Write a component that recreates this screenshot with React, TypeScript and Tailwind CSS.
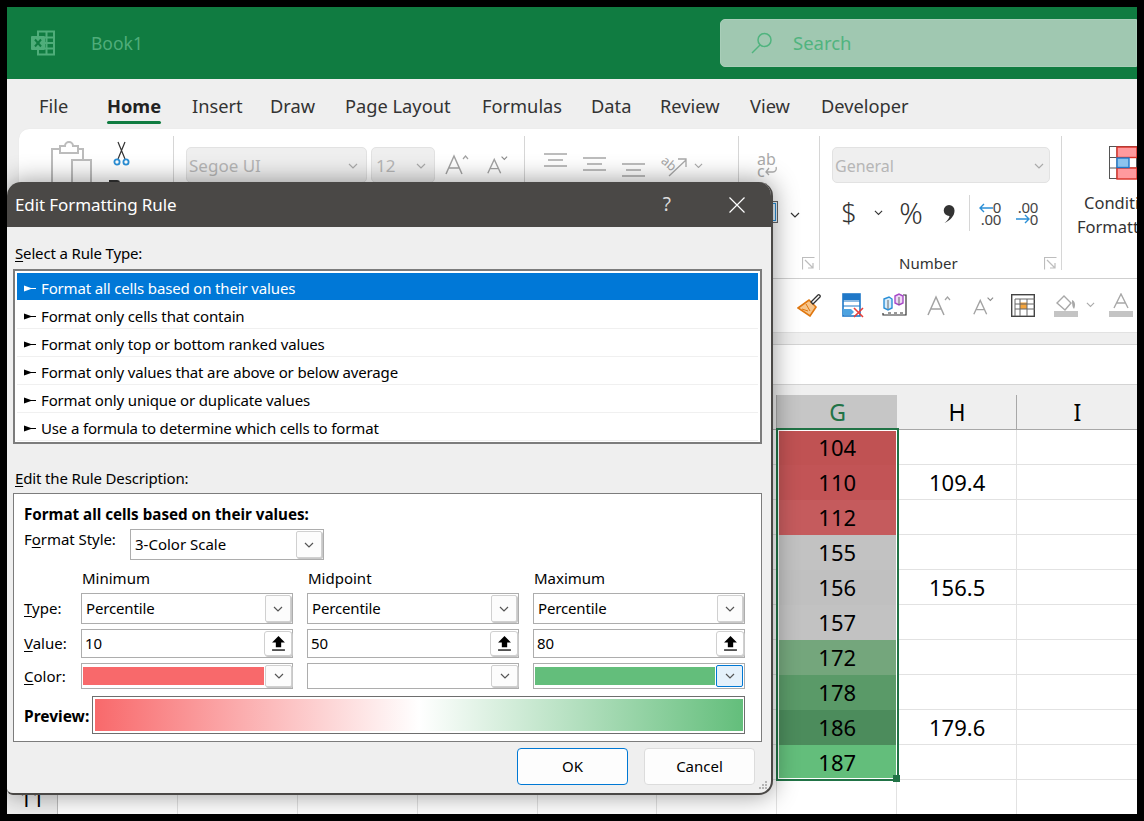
import React from "react";

const Chev = ({ c = "#9a9a9a", w = 10 }: { c?: string; w?: number }) => (
  <svg width={w} height={w * 0.6} viewBox="0 0 10 6" fill="none" stroke={c} strokeWidth="1.2"><path d="M1 1l4 4 4-4" /></svg>
);

const ExcelIcon = () => (
  <svg width="25" height="26" viewBox="0 0 25 26" fill="none">
    <path d="M7 1.500h16v23H7z" fill="#107c41" stroke="#4fad7a" strokeWidth="2" />
    <path d="M14 7.500h9M14 13h9M14 18.500h9M15.500 2v22" stroke="#4fad7a" strokeWidth="2" />
    <rect x="0" y="6" width="14" height="14" rx="1" fill="#4fad7a" />
    <path d="M4 9.500l6 7M10 9.500l-6 7" stroke="#107c41" strokeWidth="2" />
  </svg>
);

const Clipboard = () => (
  <svg width="42" height="42" viewBox="0 0 42 42" fill="none" stroke="#bcbcbc" strokeWidth="2">
    <path d="M1 41V8h8V5h5a4 4 0 0 1 8 0h5v3h5v10" />
    <path d="M9 8v4h18V8" />
    <path d="M21 19h19v23H21z" fill="#fbfbfb" />
  </svg>
);

const Scissors = () => (
  <svg width="17" height="25" viewBox="0 0 17 25" fill="none">
    <path d="M12 1L5 18M5 1l7 17" stroke="#333" strokeWidth="1.2" />
    <circle cx="4" cy="21" r="2.600" stroke="#2b8fd6" strokeWidth="1.800" />
    <circle cx="13" cy="21" r="2.600" stroke="#2b8fd6" strokeWidth="1.800" />
  </svg>
);

const FontGrow = ({ up, big, c = "#a3a3a3" }: { up: boolean; big?: boolean; c?: string }) => (
  <svg width={big ? 24 : 22} height="22" viewBox="0 0 24 22" fill="none" stroke={c} strokeWidth="1.500">
    {big ? <path d="M1 21L9 3l8 18M4 15h10" /> : <path d="M2 21L9 6l7 15M5 16h8" />}
    <path d={up ? "M18 6l2.500-3L23 6" : "M17 3l3 3 3-3"} strokeWidth="1.200" stroke={up ? c : "#8a8a8a"} />
  </svg>
);

const AlignLines = () => (
  <svg width="23" height="15" viewBox="0 0 23 15" stroke="#a8a8a8" strokeWidth="1.300"><path d="M0 1h23M4 7h15M0 13h23" /></svg>
);

const Orient = () => (
  <svg width="26" height="24" viewBox="0 0 26 24" fill="none" stroke="#a8a8a8" strokeWidth="1.300">
    <path d="M8 23L25 7M17 6h8v8" />
    <text x="0" y="13" fontSize="13" fill="#a8a8a8" stroke="none" transform="rotate(40 5 10)">ab</text>
  </svg>
);

const Launcher = () => (
  <svg width="13" height="13" viewBox="0 0 13 13" fill="none" stroke="#bdbdbd" strokeWidth="1.200">
    <path d="M.5 12.500V.5h12M3 3l8 8M11 6v5H6" />
  </svg>
);

const CondFormat = () => (
  <svg width="28" height="34" viewBox="0 0 28 34" className="shrink-0">
    <rect x=".5" y=".5" width="27" height="32" fill="#fff" stroke="#555" />
    <path d="M8 1v32M0 11.500h28M0 22h28" stroke="#555" />
    <rect x="8" y="1" width="20" height="10.500" fill="#ff9a9e" stroke="#d93025" strokeWidth="1.400" />
    <rect x="8" y="22" width="20" height="11" fill="#ff9a9e" stroke="#d93025" strokeWidth="1.400" />
    <rect x="8" y="12" width="12" height="9.500" fill="#8cc4ee" stroke="#1f78c8" strokeWidth="1.400" />
  </svg>
);

const DecArrow = ({ left }: { left: boolean }) => (
  <div className="flex flex-col items-end w-[24px] text-[#444] text-[15px] leading-[12px] tracking-[-0.3px]">
    <div className="w-full text-right">{left ? "0" : ".00"}</div>
    <div className="w-full text-right">{left ? ".00" : "0"}</div>
  </div>
);

const Arrow = ({ left }: { left: boolean }) => (
  <svg width="14" height="10" viewBox="0 0 14 10" fill="none" stroke="#2b8fd6" strokeWidth="1.400" className={left ? "-mr-[16px] mb-[10px] z-10" : "-mr-[16px] mt-[12px] z-10"}>
    {left ? <path d="M14 5H1M5 1L1 5l4 4" /> : <path d="M0 5h13M9 1l4 4-4 4" />}
  </svg>
);

const Brush = () => (
  <svg width="25" height="24" viewBox="0 0 25 24" fill="none">
    <path d="M1 15l11-8 7 7-6 9z" fill="#f6c58c" stroke="#e0770f" strokeWidth="1.600" />
    <path d="M5 16l6 2M9 11l4 7" stroke="#e0770f" />
    <path d="M14 9l7-7c1-1 3 1 2 2l-7 7z" fill="#fff" stroke="#333" strokeWidth="1.300" />
  </svg>
);
const DeleteRule = () => (
  <svg width="23" height="25" viewBox="0 0 23 25" fill="none">
    <rect x="1" y="1" width="17" height="22" fill="#fff" stroke="#1f78c8" strokeWidth="1.600" />
    <rect x="1" y="1" width="17" height="6" fill="#1f78c8" />
    <path d="M1 8h17M1 13h17" stroke="#1f78c8" />
    <path d="M1 16h8l3 3-3 3H1z" fill="#4da3e0" />
    <path d="M12 15l9 9M21 15l-9 9" stroke="#e8403a" strokeWidth="1.600" />
  </svg>
);
const Cubes = () => (
  <svg width="25" height="24" viewBox="0 0 25 24" fill="none">
    <path d="M1 20v2h23V2h-3" stroke="#333" strokeWidth="1.200" />
    <path d="M6 20h3M12 20h3M18 20h3" stroke="#333" />
    <path d="M2 6l5-2 3 2v9l-4 2-4-2z" fill="#d6ecfb" stroke="#2b8fd6" strokeWidth="1.400" />
    <path d="M13 3l4-2 4 2v7l-4 2-4-2z" fill="#eed8f5" stroke="#a84ac8" strokeWidth="1.400" />
    <path d="M6 7v9M17 4v8" stroke="#666" />
  </svg>
);
const TableIcon = () => (
  <svg width="24" height="23" viewBox="0 0 24 23" fill="none">
    <rect x=".7" y=".7" width="22.600" height="21.600" fill="#fff" stroke="#444" strokeWidth="1.400" />
    <rect x="9" y="8.500" width="7" height="6.500" fill="#f4a43c" />
    <path d="M4 5h20M4 10h20M4 15h20M4 5v17M9 5v17M16 5v17" stroke="#666" />
  </svg>
);
const FillIcon = () => (
  <svg width="24" height="24" viewBox="0 0 24 24" fill="none">
    <path d="M3 10l7-7 7 7-6 7z" stroke="#a8a8a8" strokeWidth="1.400" />
    <path d="M18 7c3 1 4 5 2 9-2-2-2-6-2-9z" fill="#a8a8a8" />
    <rect y="18" width="24" height="6" fill="#c4c4c4" />
  </svg>
);
const AColor = () => (
  <svg width="24" height="24" viewBox="0 0 24 24" fill="none">
    <path d="M5 15L12 1l7 14M7.500 10h9" stroke="#a8a8a8" strokeWidth="1.400" />
    <rect y="18" width="24" height="6" fill="#c4c4c4" />
  </svg>
);

const Marker = ({ c }: { c: string }) => (
  <svg width="12" height="7" viewBox="0 0 12 7" className="shrink-0"><path d="M0 .5L7 3h5v1H7L0 6.500z" fill={c} /></svg>
);

const rules = [
  "Format all cells based on their values",
  "Format only cells that contain",
  "Format only top or bottom ranked values",
  "Format only values that are above or below average",
  "Format only unique or duplicate values",
  "Use a formula to determine which cells to format",
];

const DropBtn = ({ active, wide }: { active?: boolean; wide?: boolean }) => (
  <div className={active
    ? "w-[27px] h-full shrink-0 border border-[#0078d4] rounded-[2px] bg-[#e5f1fb] flex items-center justify-center"
    : wide
    ? "w-[27px] h-full shrink-0 border border-[#d0d0d0] rounded-[2px] bg-[#fcfcfc] shadow-[1px_1px_0_#c8c8c8] flex items-center justify-center"
    : "w-[26px] h-full shrink-0 border border-[#d0d0d0] rounded-[2px] bg-[#fcfcfc] shadow-[1px_1px_0_#c8c8c8] flex items-center justify-center"}>
    <Chev c="#555" />
  </div>
);

const SelectBox = ({ text }: { text: string }) => (
  <div className="h-[31px] border border-[#adadad] bg-white flex items-center justify-between pl-[4px] pr-[1px] py-[1px]">
    <span className="text-[15px] tracking-[-0.15px]">{text}</span>
    <DropBtn />
  </div>
);

const ValueBox = ({ text }: { text: string }) => (
  <div className="h-[29px] border border-[#adadad] bg-white flex items-center justify-between pl-[3px] py-[1px]">
    <span className="text-[15px]">{text}</span>
    <div className="w-[28px] h-full shrink-0 border border-[#d0d0d0] rounded-[3px] bg-white shadow-[1px_1px_0_#c8c8c8] flex items-center justify-center">
      <svg width="13" height="15" viewBox="0 0 12 14"><path d="M6 0l6 6H8.500v4.500h-5V6H0z" fill="#000" /><rect y="12.500" width="12" height="1.200" fill="#000" /></svg>
    </div>
  </div>
);

const ColorBox = ({ color, active }: { color?: string; active?: boolean }) => (
  <div className={active
    ? "h-[26px] border border-[#adadad] bg-white flex items-center pl-[1px] pr-[1px] py-[1px]"
    : "h-[26px] border border-[#adadad] bg-white flex items-center pl-[1px] py-[1px]"}>
    <div className="flex-1 h-[18px] mr-[1px]" style={color ? { backgroundColor: color } : undefined} />
    <DropBtn active={active} wide />
  </div>
);

const U = ({ children }: { children: React.ReactNode }) => <span className="underline underline-offset-2">{children}</span>;

const Dialog = () => (
  <div className="absolute left-0 top-[175px] w-[766px] h-[613px] bg-[#efefef] rounded-t-[14px] rounded-br-[14px] rounded-bl-[6px] border-r-2 border-b-2 border-[#4a4846] shadow-[0_0_26px_rgba(0,0,0,0.42)] flex flex-col text-black overflow-hidden">
    <div className="h-[45px] shrink-0 bg-[#4a4846] flex items-center pl-[8px] text-white text-[17px]">
      <span className="flex-1 tracking-[-0.1px]">Edit Formatting Rule</span>
      <span className="text-[#dcdcdc] text-[19px] mr-[58px]">?</span>
      <svg width="16" height="16" viewBox="0 0 16 16" stroke="#fff" strokeWidth="1.200" className="mr-[26px]"><path d="M.5.5l15 15M15.500.5l-15 15" /></svg>
    </div>
    <div className="flex-1 flex flex-col pl-[6px] relative text-[15px]">
      <div className="leading-[20px] mt-[16px] pl-[2px] tracking-[-0.15px]"><U>S</U>elect a Rule Type:</div>
      <div className="mt-[6px] w-[749px] h-[175px] border-2 border-[#7c7c7c] bg-white pt-[2px] px-[2px] pb-px flex flex-col">
        {rules.map((r, i) => (
          <div key={r} className={i === 0
            ? "h-[27px] bg-[#0078d7] text-white flex items-center pl-[7px] pt-[4px] gap-[5px] mb-px"
            : "h-[28px] border-b border-[#f0f0f0] flex items-center pl-[7px] pt-[4px] gap-[5px]"}>
            <Marker c={i === 0 ? "#fff" : "#000"} />
            <span className="tracking-[-0.15px]">{r}</span>
          </div>
        ))}
      </div>
      <div className="leading-[20px] mt-[24px] pl-[2px] tracking-[-0.15px]"><U>E</U>dit the Rule Description:</div>
      <div className="mt-[5px] w-[749px] h-[249px] border border-[#7c7c7c] bg-white pl-[10px] pr-[16px] pt-[10px] flex flex-col">
        <div className="text-[15.2px] font-bold leading-[20px]">Format all cells based on their values:</div>
        <div className="flex items-start mt-[5px]">
          <span className="w-[106px] leading-[20px] tracking-[-0.05px]">F<U>o</U>rmat Style:</span>
          <div className="w-[194px] h-[31px] border border-[#adadad] flex items-center justify-between pl-[4px] pr-[1px] py-[1px]">
            <span>3-Color Scale</span>
            <DropBtn />
          </div>
        </div>
        <div className="grid grid-cols-[43px_212px_212px_212px] gap-x-[14px] mt-[7px] items-center">
          <div />
          <div className="leading-[22px] pl-px">Minimum</div>
          <div className="leading-[22px] pl-px">Midpoint</div>
          <div className="leading-[22px] pl-px">Maximum</div>
        </div>
        <div className="grid grid-cols-[43px_212px_212px_212px] gap-x-[14px] gap-y-[5px] mt-[4px] items-center">
          <div><U>T</U>ype:</div>
          <SelectBox text="Percentile" /><SelectBox text="Percentile" /><SelectBox text="Percentile" />
          <div><U>V</U>alue:</div>
          <ValueBox text="10" /><ValueBox text="50" /><ValueBox text="80" />
          <div><U>C</U>olor:</div>
          <ColorBox color="#f8696b" /><ColorBox /><ColorBox color="#63be7b" active />
        </div>
        <div className="flex items-center mt-[7px]">
          <span className="w-[68px] text-[15.5px] font-bold pt-[3px]">Preview:</span>
          <div className="w-[653px] h-[38px] border border-[#6e6e6e] pl-[2px] py-[2px] pr-px">
            <div className="w-full h-full bg-[linear-gradient(to_right,#f8696b,#ffffff_50%,#63be7b)]" />
          </div>
        </div>
      </div>
      <div className="flex gap-[16px] mt-[6px] ml-[504px]">
        <div className="w-[111px] h-[37px] border border-[#0078d4] rounded-[4px] bg-[#fdfdfd] flex items-center justify-center">OK</div>
        <div className="w-[111px] h-[37px] border border-[#dcdcdc] rounded-[4px] bg-[#fdfdfd] flex items-center justify-center">Cancel</div>
      </div>
      <svg width="10" height="10" viewBox="0 0 10 10" fill="#b4b4b4" className="absolute right-[3px] bottom-[2px]">
        <rect x="7" y="0" width="2" height="2" /><rect x="4" y="3" width="2" height="2" /><rect x="7" y="3" width="2" height="2" /><rect x="1" y="6" width="2" height="2" /><rect x="4" y="6" width="2" height="2" /><rect x="7" y="6" width="2" height="2" />
      </svg>
    </div>
  </div>
);

const tabs: [string, string][] = [
  ["File", "w-[68px]"],
  ["Home", "w-[85px]"],
  ["Insert", "w-[78px]"],
  ["Draw", "w-[75px]"],
  ["Page Layout", "w-[137px]"],
  ["Formulas", "w-[109px]"],
  ["Data", "w-[69px]"],
  ["Review", "w-[90px]"],
  ["View", "w-[71px]"],
  ["Developer", "w-[89px]"],
];

const cells: [string, string, string][] = [
  ["104", "#c05253", ""],
  ["110", "#c25456", "109.4"],
  ["112", "#c55b5d", ""],
  ["155", "#c2c2c2", ""],
  ["156", "#c0c0c0", "156.5"],
  ["157", "#c2c2c2", ""],
  ["172", "#74a67c", ""],
  ["178", "#5a9a68", ""],
  ["186", "#4c8c5c", "179.6"],
  ["187", "#63be7b", ""],
];

const cols = ["A", "B", "C", "D", "E", "F"];

const Sheet = () => (
  <div className="flex flex-col relative">
    <div className="flex h-[35px]">
      <div className="w-[51px] bg-[#efefef] border-b border-[#a8a8a8]" />
      {cols.map((c) => (
        <div key={c} className="w-[120px] bg-[#efefef] border-b border-r border-[#a8a8a8] flex items-center justify-center text-[23px]">{c}</div>
      ))}
      <div className="w-[120px] bg-[#c6c6c6] border-b border-[#a8a8a8] flex items-center justify-center pl-px text-[23px] text-[#217346]">G</div>
      <div className="w-[120px] bg-[#efefef] border-b border-r border-[#a8a8a8] flex items-center justify-center pl-px text-[23px]">H</div>
      <div className="w-[120px] bg-[#efefef] border-b border-[#a8a8a8] flex items-center justify-center pl-px text-[23px]">I</div>
    </div>
    {[...cells, ["", "", ""] as [string, string, string]].map(([g, color, h], i) => (
      <div key={i} className="flex h-[35px]">
        <div className="w-[51px] bg-[#efefef] border-r border-[#bdbdbd] flex items-center justify-center text-[22px] pt-px">{i + 1}</div>
        {cols.map((c) => (
          <div key={c} className="w-[120px] bg-white border-b border-r border-[#e2e2e2]" />
        ))}
        <div className={color
          ? "w-[120px] flex items-center justify-center pb-[2px] text-[22px] leading-none"
          : "w-[120px] border-b border-r border-[#e2e2e2]"} style={color ? { backgroundColor: color } : undefined}>{g}</div>
        <div className="w-[120px] bg-white border-b border-r border-[#e2e2e2] flex items-center justify-center pl-px pb-px text-[22px] leading-none">{h}</div>
        <div className="w-[120px] bg-white border-b border-[#e2e2e2]" />
      </div>
    ))}
    <div className="absolute left-[769px] top-[33px] w-[123px] h-[353px] border-2 border-[#217346] outline outline-1 -outline-offset-3 outline-white">
      <div className="absolute -right-[3px] -bottom-[3px] w-[7px] h-[7px] bg-[#217346]" />
    </div>
  </div>
);

export default function App() {
  return (
    <div className="w-[1144px] h-[821px] bg-black p-[7px] font-['Noto_Sans','Open_Sans',sans-serif] text-black overflow-hidden">
      <div className="relative w-[1130px] h-[807px] overflow-hidden flex flex-col bg-white">
        <div className="h-[72px] shrink-0 bg-[#107c41] flex items-center pl-[24px]">
          <ExcelIcon />
          <span className="ml-[35px] text-[17.5px] text-[#4fad7a]">Book1</span>
          <div className="ml-auto w-[417px] h-[48px] bg-[#a0c8b1] rounded-l-[5px] border border-[#a9ceb9] flex items-center pl-[30px]">
            <svg width="22" height="22" viewBox="0 0 22 22" fill="none" stroke="#50b47f" strokeWidth="1.500"><circle cx="13.500" cy="8" r="6.500" /><path d="M9 13l-8 8" /></svg>
            <span className="ml-[20px] text-[18.5px] text-[#50b47f]">Search</span>
          </div>
        </div>
        <div className="h-[50px] shrink-0 bg-[#efefef] flex items-start pl-[32px] pt-[15px] text-[18.25px] leading-[24px] text-[#333] whitespace-nowrap">
          {tabs.map(([t, w]) => (
            <div key={t} className={w}>
              {t === "Home" ? (
                <div className="relative inline-block font-bold text-[#222]">
                  {t}
                  <div className="absolute left-0 right-0 top-[27px] h-[2.500px] rounded-full bg-[#107c41]" />
                </div>
              ) : t}
            </div>
          ))}
        </div>
        <div className="h-[150px] shrink-0 bg-[#efefef]">
          <div className="h-full ml-[12px] bg-white rounded-tl-[10px] border-b border-[#cfcfcf] flex pt-[7px] shadow-[0_0_1px_#ddd]">
            <div className="w-[155px] h-[134px] border-r border-[#d6d6d6] flex items-start pl-[32px] pt-[5px] gap-[20px] shrink-0">
              <Clipboard />
              <div className="flex flex-col">
                <Scissors />
                <div className="-ml-[4px] mt-[14px] w-[11px] h-[4px] border-t-2 border-r-2 border-[#333] rounded-tr-[3px]" />
              </div>
            </div>
            <div className="w-[351px] h-[134px] border-r border-[#d6d6d6] flex items-start pl-[12px] pt-[11px] shrink-0">
              <div className="w-[181px] h-[36px] rounded-[5px] bg-[#efefef] border border-[#e2e2e2] flex items-center justify-between pl-[2px] pr-[8px] pt-[2px] text-[17px] text-[#b6b6b6]">Segoe UI<Chev c="#aaa" /></div>
              <div className="w-[64px] h-[36px] ml-[4px] rounded-[5px] bg-[#efefef] border border-[#e2e2e2] flex items-center justify-between pl-[4px] pr-[8px] pt-[2px] text-[17px] text-[#b6b6b6]">12<Chev c="#aaa" /></div>
              <div className="ml-[10px] mt-[6px]"><FontGrow up big /></div>
              <div className="ml-[17px] mt-[6px]"><FontGrow up={false} /></div>
            </div>
            <div className="w-[214px] h-[134px] border-r border-[#d6d6d6] flex items-start pl-[19px] pt-[17px] gap-[16px] shrink-0">
              <AlignLines />
              <div className="mt-[4px]"><AlignLines /></div>
              <div className="mt-[10px]"><AlignLines /></div>
              <Orient />
              <div className="mt-[10px] -ml-[9px]"><Chev c="#aaa" w={9} /></div>
            </div>
            <div className="w-[81px] h-[134px] border-r border-[#d6d6d6] relative flex flex-col pl-[18px] pt-[17px] shrink-0">
              <div className="text-[#aaa] text-[16px] leading-[12px]">ab</div>
              <div className="flex items-center text-[#aaa] text-[16px] leading-[12px]">
                c
                <svg width="12" height="10" viewBox="0 0 12 10" fill="none" stroke="#aaa" strokeWidth="1.300"><path d="M11 1c1 3-1 5-3 5H1M4 2L1 6l3 3" /></svg>
              </div>
              <div className="absolute left-[19px] top-[65px] w-[20px] h-[22px] border border-[#666] bg-[#eaf4fc] outline outline-1 -outline-offset-3 outline-[#2b8fd6]" />
              <div className="absolute right-[19px] top-[76px]"><Chev c="#333" /></div>
              <div className="absolute right-[4px] bottom-0"><Launcher /></div>
            </div>
            <div className="w-[242px] h-[134px] border-r border-[#d6d6d6] flex flex-col pl-[12px] pt-[11px] shrink-0">
              <div className="w-[218px] h-[36px] shrink-0 rounded-[5px] bg-[#efefef] border border-[#e2e2e2] flex items-center justify-between pl-[2px] pr-[5px] pt-[2px] text-[16px] text-[#b6b6b6]">General<Chev c="#aaa" /></div>
              <div className="flex items-center h-[36px] shrink-0 mt-[12px] text-[#333]">
                <span className="text-[27px] font-light w-[24px] text-center ml-[5px]">$</span>
                <div className="ml-[13px]"><Chev c="#333" w={9} /></div>
                <span className="text-[29px] font-light ml-[12px] w-[32px] text-center">%</span>
                <svg width="13" height="18" viewBox="0 0 13 18" fill="#333" className="ml-[15px] mt-px"><path d="M7 0a5.500 5.500 0 0 1 5.500 6c0 5-4.500 9.500-10 12 3-2.500 5-5 5-7A5.500 5.500 0 0 1 7 0z" /></svg>
                <div className="w-px h-[36px] bg-[#d6d6d6] ml-[14px]" />
                <div className="flex items-center ml-[9px]"><Arrow left /><DecArrow left /></div>
                <div className="flex items-center ml-[15px]"><Arrow left={false} /><DecArrow left={false} /></div>
              </div>
              <div className="flex items-end mt-[23px]">
                <span className="text-[15px] leading-[18px] ml-[67px] text-[#333]">Number</span>
                <div className="ml-auto mr-[4px] mb-[2px]"><Launcher /></div>
              </div>
            </div>
            <div className="flex-1 flex flex-col items-start pl-[15px] overflow-hidden whitespace-nowrap text-[#333] text-[16.5px] leading-[24px]">
              <div className="ml-[32px] mt-[10px] mb-[11px]"><CondFormat /></div>
              <div className="ml-[7px]">Conditional</div>
              <div>Formatting</div>
            </div>
          </div>
        </div>
        <div className="h-[54px] shrink-0 bg-white border-b border-[#e2e2e2] flex items-center pb-[1px] pl-[790px]">
          <Brush />
          <div className="ml-[20px]"><DeleteRule /></div>
          <div className="ml-[17px]"><Cubes /></div>
          <div className="ml-[20px]"><FontGrow up big /></div>
          <div className="ml-[21px]"><FontGrow up={false} /></div>
          <div className="ml-[17px]"><TableIcon /></div>
          <div className="ml-[19px]"><FillIcon /></div>
          <div className="ml-[8px]"><Chev c="#aaa" w={9} /></div>
          <div className="ml-[14px]"><AColor /></div>
        </div>
        <div className="h-[12px] shrink-0 bg-[#efefef] border-b border-[#d4d4d4]" />
        <div className="h-[40px] shrink-0 bg-white border-b border-[#d4d4d4]" />
        <div className="h-[10px] shrink-0 bg-[#efefef]" />
        <Sheet />
        <Dialog />
      </div>
    </div>
  );
}
